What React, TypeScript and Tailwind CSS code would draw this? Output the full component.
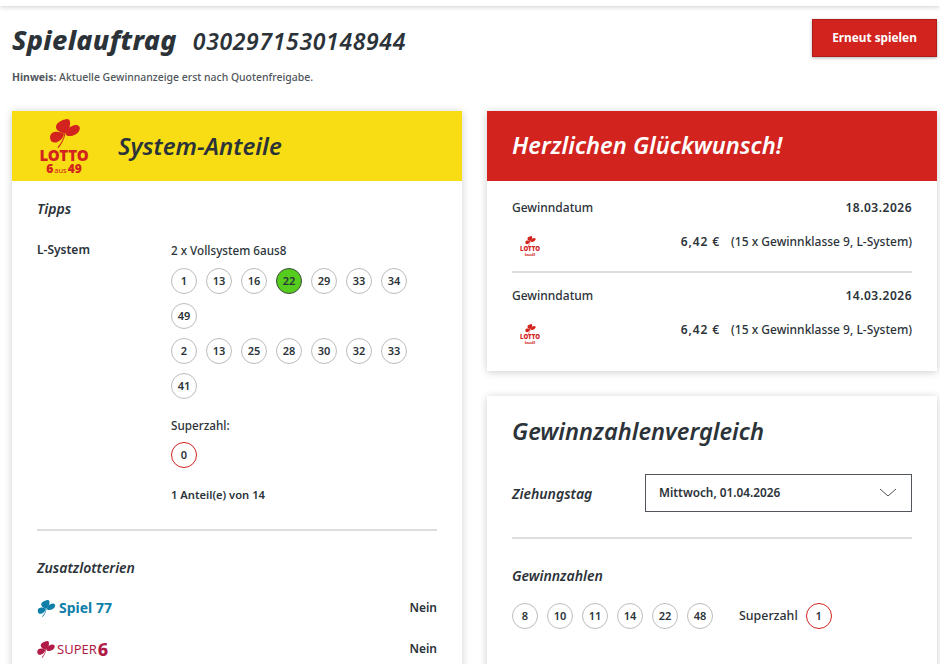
const font = { fontFamily: '"Noto Sans", "Open Sans", sans-serif' };

function Clover({ color, className }: { color: string; className?: string }) {
  return (
    <svg viewBox="0 0 30 29" className={className} fill={color}>
      <path d="M14.5 15C10 13 6 11.5 6 8C6 4 11 1 17 0C20 0 20.5 3 20 6C19.5 10 17.5 13 14.5 15Z" />
      <path d="M15.5 15C16.5 10 20 7 25 6C29 5.500 30.500 8 29.500 11C28 15 23 17.500 18 17C17 16.800 16 16 15.500 15Z" />
      <path d="M14 15C10 12.500 5 12 2 14C-0.500 16 -0.500 20 1.500 22.500C4 24.500 8 23.500 10.500 21C12.500 19.500 13.500 17 14 15Z" />
      <path d="M14.200 15L15.200 15.300C14.500 20 12 25 8.500 29L7.500 28.300C11 24.500 13.500 20 14.200 15Z" />
    </svg>
  );
}

function LottoLogo() {
  return (
    <div className="flex w-[48px] flex-col items-center text-[#d2231f]">
      <Clover color="#d2231f" className="ml-[1px] h-[29px] w-[30px]" />
      <div className="text-[15px] leading-[15px] font-black tracking-[-0.1px]">LOTTO</div>
      <div className="flex items-baseline text-[12px] leading-[12px] font-black">
        6<span className="mx-[1px] text-[7.5px] font-normal">aus</span>49
      </div>
    </div>
  );
}

function MiniLotto() {
  return (
    <div className="flex w-[18px] flex-col items-center text-[#d2231f]">
      <Clover color="#d2231f" className="ml-[1px] h-[10px] w-[11px]" />
      <div className="text-[6px] leading-[7px] font-black">LOTTO</div>
      <div className="text-[3px] leading-[4px] font-bold">6aus49</div>
    </div>
  );
}

function Ball({ n, variant }: { n: number; variant?: "hit" | "super" }) {
  const look =
    variant === "hit"
      ? "border-[#3a4a3a] bg-[#55cc1e]"
      : variant === "super"
        ? "border-[#d2231f] bg-white"
        : "border-[#bcbcbc] bg-white";
  return (
    <div className={`flex h-[26px] w-[26px] items-center justify-center rounded-full border text-[11px] font-semibold text-[#2b3339] ${look}`}>
      {n}
    </div>
  );
}

function BallRow({ nums, hit }: { nums: number[]; hit?: number }) {
  return (
    <div className="flex flex-wrap gap-[9px]">
      {nums.map((n, i) => (
        <Ball key={i} n={n} variant={n === hit ? "hit" : undefined} />
      ))}
    </div>
  );
}

function WinRow({ date }: { date: string }) {
  return (
    <div>
      <div className="flex items-center justify-between text-[12px] leading-[18px]">
        <span className="font-medium">Gewinndatum</span>
        <span className="font-semibold tracking-[0.5px]">{date}</span>
      </div>
      <div className="mt-[15px] flex items-center justify-between text-[12px] leading-[18px]">
        <div className="ml-[9px] mt-[4px]">
          <MiniLotto />
        </div>
        <div className="mb-[5px] flex font-medium">
          <span className="font-semibold tracking-[0.9px]">6,42 €</span>
          <span className="ml-[11px]">(15 x Gewinnklasse 9, L-System)</span>
        </div>
      </div>
    </div>
  );
}

export default function App() {
  return (
    <div className="h-[664px] w-[940px] overflow-hidden bg-white text-[#2b3339]" style={font}>
      <div className="h-[6px] bg-white shadow-[0_1px_5px_rgba(0,0,0,0.2)]" />

      <div className="flex justify-between pr-[3px] pl-[12px]">
        <div>
          <div className="mt-[16px] flex items-baseline">
            <h1 className="text-[27px] leading-[36px] font-extrabold italic tracking-[0.3px]">Spielauftrag</h1>
            <span className="ml-[16px] text-[23px] leading-[36px] font-semibold italic tracking-[0.65px]">0302971530148944</span>
          </div>
          <p className="mt-[10px] text-[10.45px] leading-[16px] font-medium text-[#50565b]">
            <span className="font-bold">Hinweis:</span> Aktuelle Gewinnanzeige erst nach Quotenfreigabe.
          </p>
        </div>
        <button className="mt-[13px] h-[38px] w-[125px] border border-[#b01c19] bg-[#d2231f] text-[11.8px] font-bold text-white shadow-[0_1px_3px_rgba(0,0,0,0.3)]">
          Erneut spielen
        </button>
      </div>

      <div className="mt-[26px] flex gap-[25px] pl-[12px]">
        {/* linke Karte */}
        <div className="h-[600px] w-[450px] bg-white shadow-[0_1px_8px_rgba(0,0,0,0.2)]">
          <div className="flex h-[70px] items-center bg-[#f8dd14]">
            <div className="ml-[28px] mt-[2px]">
              <LottoLogo />
            </div>
            <h2 className="ml-[30px] text-[24px] font-semibold italic">System-Anteile</h2>
          </div>

          <div className="px-[25px]">
            <h3 className="mt-[18px] text-[14px] leading-[20px] font-semibold italic">Tipps</h3>

            <div className="mt-[22px] flex">
              <div className="w-[134px] text-[12px] leading-[18px] font-semibold">L-System</div>
              <div className="flex-1">
                <div className="text-[11.7px] leading-[18px] font-medium">2 x Vollsystem 6aus8</div>
                <div className="mt-[9px] flex flex-col gap-[9px]">
                  <BallRow nums={[1, 13, 16, 22, 29, 33, 34, 49]} hit={22} />
                  <BallRow nums={[2, 13, 25, 28, 30, 32, 33, 41]} />
                </div>
                <div className="mt-[17px] text-[11.7px] leading-[18px] font-medium">Superzahl:</div>
                <div className="mt-[8px]">
                  <Ball n={0} variant="super" />
                </div>
                <div className="mt-[18px] text-[11.2px] leading-[18px] font-semibold">1 Anteil(e) von 14</div>
              </div>
            </div>

            <div className="mt-[25px] h-[2px] bg-[#dedede]" />

            <h3 className="mt-[27px] text-[14px] leading-[20px] font-semibold italic">Zusatzlotterien</h3>

            <div className="mt-[20px] flex items-center justify-between">
              <div className="flex items-center text-[#0f7ea8]">
                <Clover color="#0f7ea8" className="h-[17px] w-[19px]" />
                <span className="ml-[3px] text-[14px] leading-[20px] font-bold">Spiel 77</span>
              </div>
              <span className="text-[12px] leading-[20px] font-semibold">Nein</span>
            </div>

            <div className="mt-[21px] flex items-center justify-between">
              <div className="flex items-center text-[#b01c47]">
                <Clover color="#b01c47" className="h-[17px] w-[18px]" />
                <span className="ml-[2px] text-[13px] leading-[20px]">SUPER</span>
                <span className="ml-[1px] text-[18px] leading-[20px] font-extrabold">6</span>
              </div>
              <span className="text-[12px] leading-[20px] font-semibold">Nein</span>
            </div>
          </div>
        </div>

        {/* rechte Spalte */}
        <div className="flex w-[450px] flex-col gap-[25px]">
          <div className="h-[260px] bg-white shadow-[0_1px_8px_rgba(0,0,0,0.2)]">
            <div className="flex h-[70px] items-center bg-[#d2231f] px-[25px]">
              <h2 className="text-[23.6px] font-semibold italic text-white">Herzlichen Glückwunsch!</h2>
            </div>
            <div className="px-[25px]">
              <div className="pt-[18px]">
                <WinRow date="18.03.2026" />
              </div>
              <div className="mt-[14px] h-[2px] bg-[#dedede]" />
              <div className="pt-[14px]">
                <WinRow date="14.03.2026" />
              </div>
            </div>
          </div>

          <div className="h-[400px] bg-white px-[25px] shadow-[0_1px_8px_rgba(0,0,0,0.2)]">
            <h2 className="pt-[19px] text-[23.6px] leading-[32px] font-semibold italic">Gewinnzahlenvergleich</h2>

            <div className="mt-[27px] flex items-center">
              <span className="w-[133px] text-[14px] font-semibold italic">Ziehungstag</span>
              <div className="flex h-[38px] flex-1 items-center justify-between border border-[#50565b] pr-[14px] pl-[13px]">
                <span className="text-[11.8px] font-semibold">Mittwoch, 01.04.2026</span>
                <svg viewBox="0 0 18 10" className="h-[10px] w-[18px]" fill="none" stroke="#50565b" strokeWidth="1">
                  <path d="M1 1l8 7 8-7" />
                </svg>
              </div>
            </div>

            <div className="mt-[25px] h-[2px] bg-[#dedede]" />

            <h3 className="mt-[27px] text-[14px] leading-[20px] font-semibold italic">Gewinnzahlen</h3>

            <div className="mt-[17px] flex items-center">
              <div className="flex gap-[9px]">
                {[8, 10, 11, 14, 22, 48].map((n) => (
                  <Ball key={n} n={n} />
                ))}
              </div>
              <span className="ml-[26px] text-[12.4px] font-medium">Superzahl</span>
              <div className="ml-[8px]">
                <Ball n={1} variant="super" />
              </div>
            </div>
          </div>
        </div>
      </div>
    </div>
  );
}
